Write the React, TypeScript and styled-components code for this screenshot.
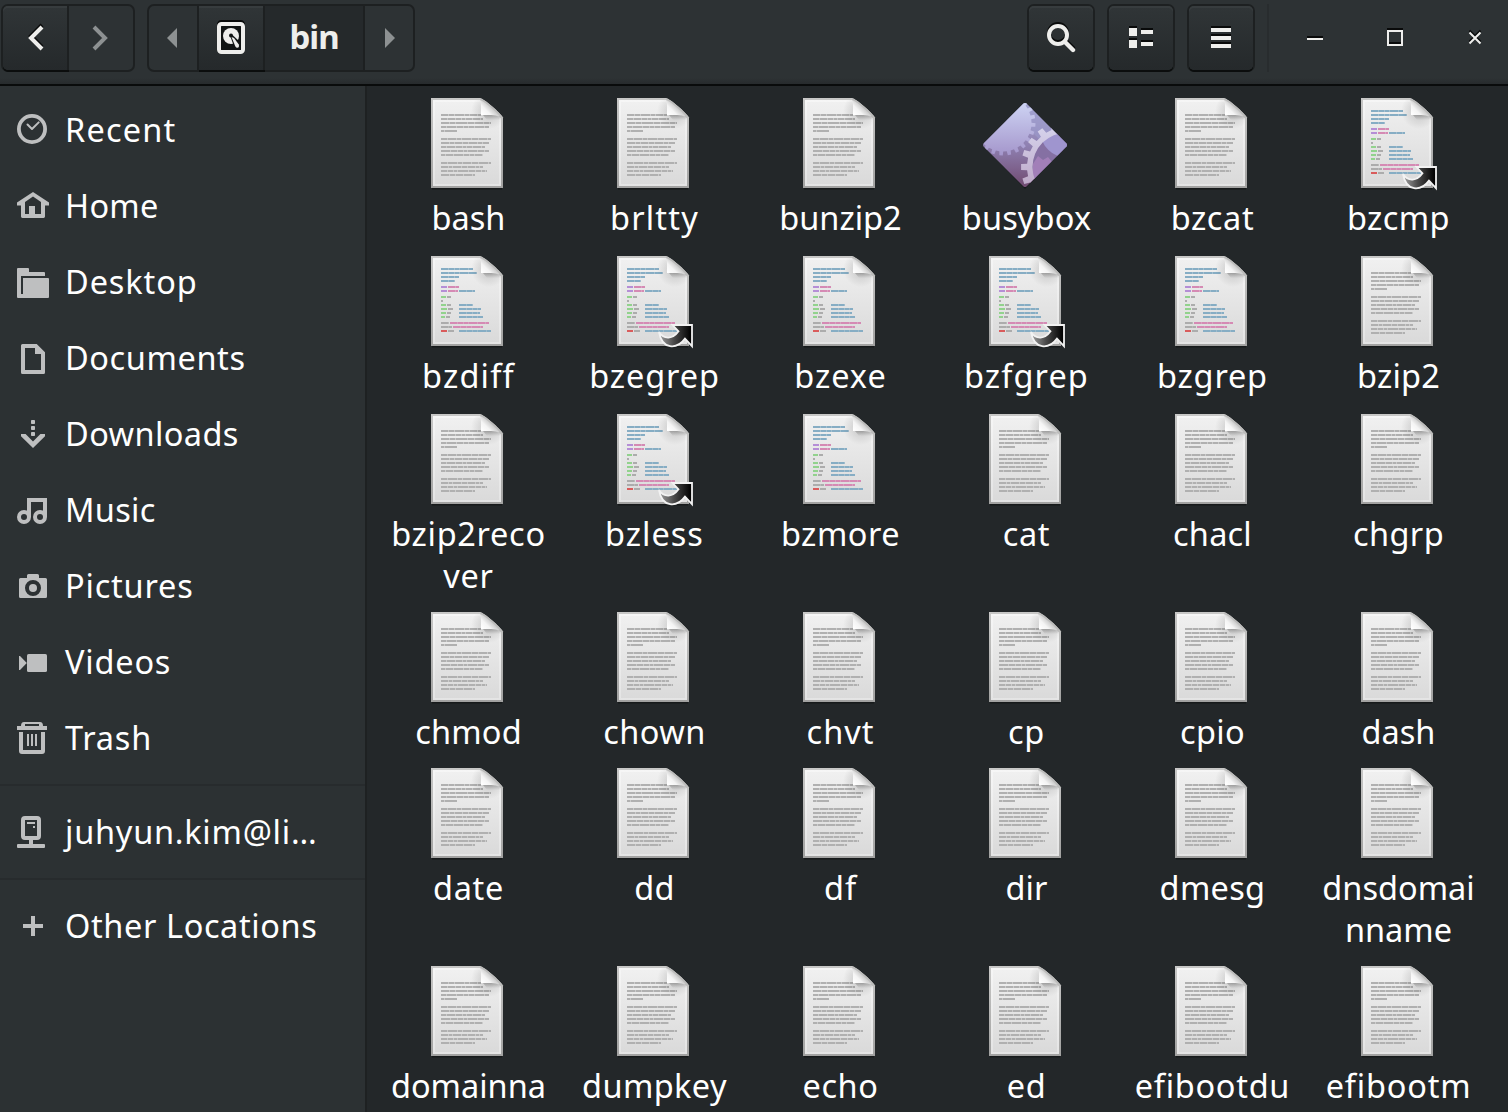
import React from 'react';
import styled, { createGlobalStyle, css } from 'styled-components';

const GlobalStyle = createGlobalStyle`
  * { box-sizing: border-box; }
  html, body { margin: 0; padding: 0; }
  body { background: #232729; overflow: hidden; }
`;

const Window = styled.div`
  width: 1508px;
  height: 1112px;
  display: flex;
  flex-direction: column;
  overflow: hidden;
  background: #232729;
  color: #fff;
  font-family: 'Noto Sans', 'Open Sans', sans-serif;
  font-size: 32.5px;
`;

const HeaderBar = styled.header`
  flex: none;
  height: 86px;
  padding: 4px 0 0 1px;
  display: flex;
  align-items: flex-start;
  background: linear-gradient(#2d3234 0, #2d3234 78px, #272b2d 84px);
  border-bottom: 2px solid #090b0b;
`;

const ButtonGroup = styled.div<{ $gap?: number }>`
  display: flex;
  height: 68px;
  margin-left: ${(p) => p.$gap ?? 0}px;
  border: 2px solid #1d2021;
  border-radius: 7px;
  background: #2d3234;
`;

const raised = css`
  background: linear-gradient(#303537, #25292b);
  box-shadow: inset 0 2px 0 #373c3e, 0 2px 0 #0b0d0d;
`;

const HeaderButton = styled.button<{ $width: number; $look?: 'raised' | 'pressed' }>`
  width: ${(p) => p.$width}px;
  height: 64px;
  padding: 0;
  display: flex;
  align-items: center;
  justify-content: center;
  border: 0;
  border-right: 2px solid #1d2021;
  background: transparent;
  color: #eeeeec;
  font: bold 34px 'Noto Sans', 'Open Sans', sans-serif;
  ${(p) => p.$look === 'raised' && raised}
  ${(p) => p.$look === 'pressed' && css`background: #25292b;`}
  &:first-child { border-radius: 5px 0 0 5px; }
  &:last-child { border-right: 0; }
  &:only-child { border-radius: 5px; }
`;

const CrumbText = styled.span`
  display: block;
  line-height: 46px;
  font-size: 33px;
  letter-spacing: -1px;
  padding-bottom: 2px;
`;

const ActionButtons = styled.div`
  margin-left: auto;
  display: flex;
  gap: 12px;
`;

const HeaderSeparator = styled.div`
  width: 2px;
  height: 68px;
  background: #282c2e;
`;

const WindowControls = styled.div`
  display: flex;
  gap: 56px;
  margin-left: 34px;
  padding: 22px 21px 0 0;
`;

const Glyph = styled.svg<{ $shadow?: boolean }>`
  display: block;
  flex: none;
  overflow: visible;
  ${(p) => p.$shadow && css`filter: drop-shadow(0 -2px 0 #090a0a);`}
`;

const PaintDefs = styled.svg`
  position: absolute;
  width: 0;
  height: 0;
`;

const Body = styled.div`
  flex: 1;
  min-height: 0;
  display: flex;
`;

const Sidebar = styled.nav`
  flex: none;
  width: 367px;
  padding-top: 6px;
  background: #2c3133;
  border-right: 2px solid #1e2122;
`;

const Place = styled.div`
  height: 76px;
  padding: 0 16px;
  display: flex;
  align-items: center;
  gap: 17px;
`;

const PlaceName = styled.span<{ $track?: number }>`
  line-height: 44px;
  white-space: nowrap;
  letter-spacing: ${(p) => p.$track ?? 0}px;
`;

const Divider = styled.hr`
  height: 2px;
  margin: 8px 0;
  border: 0;
  background: #272b2d;
`;

const Files = styled.main`
  flex: 1;
  padding: 12px 0 0 7px;
  display: grid;
  grid-template-columns: repeat(6, 186px);
  grid-template-rows: 158px 158px 198px 156px 198px 158px;
  overflow: hidden;
`;

const File = styled.div`
  display: flex;
  flex-direction: column;
  align-items: center;
`;

const FileIcon = styled.div`
  width: 72px;
  height: 90px;
  margin-bottom: 9px;
  display: flex;
  justify-content: center;
  align-items: flex-end;
`;

const FileName = styled.div<{ $track?: number }>`
  padding-left: 3px;
  line-height: 42px;
  text-align: center;
  white-space: pre;
  letter-spacing: ${(p) => p.$track ?? 0}px;
`;

const gear = (cx: number, cy: number, root: number, tip: number, teeth: number, phase = 0) => {
  const pts: string[] = [];
  const step = (Math.PI * 2) / teeth;
  for (let i = 0; i < teeth; i++) {
    const a = i * step + phase;
    [[-0.26, root], [-0.2, tip], [0.2, tip], [0.26, root]].forEach(([o, r]) => {
      pts.push(`${(cx + r * Math.cos(a + o * step)).toFixed(2)} ${(cy + r * Math.sin(a + o * step)).toFixed(2)}`);
    });
  }
  return `M${pts.join('L')}Z`;
};

const textLines: [number, number, string][] = [
  [16, 50, '7 1 5 1 9 1 4 1'], [20, 52, '6 1 7 1 5 1 3 1'], [24, 60, '8 1 5 1 11 1 6 1'],
  [28, 58, '5 1 9 1 6 1 4 1'], [32, 26, '3 1 12'],
  [40, 60, '6 1 8 1 4 1 9 1'], [44, 58, '8 1 4 1 7 1 5 1'], [48, 54, '5 1 8 1 6 1 3 1'],
  [52, 58, '9 1 6 1 5 1 3 1'], [56, 52, '4 1 7 1 9 1 5 1'],
  [64, 60, '6 1 9 1 4 1 8 1'], [68, 52, '7 1 3 1 8 1 5 1'], [72, 56, '6 1 5 1 3 1 10 1'], [76, 44, '8 1 5 1 7 1'],
];

const BLUE = '#86adc4';
const PINK = '#d58ab4';
const PURPLE = '#b58ed6';
const GREEN = '#92d28d';
const GREY = '#acacac';
const RED = '#d95c5c';

const codeLines: [number, number, number, string][] = [
  [12, 10, 42, BLUE], [16, 10, 46, BLUE], [20, 10, 28, BLUE], [24, 10, 24, BLUE],
  [30, 10, 16, PURPLE], [30, 17, 28, PINK],
  [34, 10, 16, PURPLE], [34, 17, 27, PINK], [34, 28, 44, BLUE],
  [40, 10, 15, GREEN], [40, 16, 20, GREY], [44, 10, 12, GREY],
  [48, 10, 15, GREEN], [48, 16, 20, GREY], [48, 28, 42, BLUE],
  [52, 10, 16, GREEN], [52, 17, 22, GREY], [52, 28, 50, BLUE],
  [56, 10, 15, GREEN], [56, 16, 20, GREY], [56, 28, 49, BLUE],
  [60, 10, 14, GREEN], [60, 15, 19, GREY], [60, 28, 52, BLUE],
  [66, 10, 18, GREY], [66, 19, 58, PINK],
  [70, 10, 21, GREY], [70, 22, 52, PINK],
  [74, 10, 16, RED], [74, 17, 23, GREY], [74, 28, 60, BLUE],
];

const SharedPaint = () => (
  <PaintDefs>
    <defs>
      <linearGradient id="paper" x1="0" y1="0" x2="0" y2="1">
        <stop offset="0" stopColor="#f0f0f0" /><stop offset="1" stopColor="#dadada" />
      </linearGradient>
      <linearGradient id="rim" x1="0" y1="0" x2="0" y2="1">
        <stop offset="0" stopColor="#f6f6f6" /><stop offset="1" stopColor="#e4e4e4" />
      </linearGradient>
      <linearGradient id="edge" x1="0" y1="0" x2="0" y2="1">
        <stop offset="0" stopColor="#c8c8c7" /><stop offset="1" stopColor="#a2a2a1" />
      </linearGradient>
      <linearGradient id="fold" gradientUnits="userSpaceOnUse" x1="51" y1="17" x2="60" y2="8">
        <stop offset="0" stopColor="#ffffff" /><stop offset="0.5" stopColor="#f4f4f4" /><stop offset="1" stopColor="#c4c4c4" />
      </linearGradient>
      <radialGradient id="foldShade" gradientUnits="userSpaceOnUse" cx="58" cy="13" r="18">
        <stop offset="0" stopColor="#000" stopOpacity="0.2" /><stop offset="0.5" stopColor="#000" stopOpacity="0.09" />
        <stop offset="1" stopColor="#000" stopOpacity="0" />
      </radialGradient>
      <linearGradient id="foldLip" gradientUnits="userSpaceOnUse" x1="0" y1="17" x2="0" y2="22">
        <stop offset="0" stopColor="#000" stopOpacity="0.22" /><stop offset="1" stopColor="#000" stopOpacity="0" />
      </linearGradient>
      <linearGradient id="arrow" gradientUnits="userSpaceOnUse" x1="43" y1="0" x2="74" y2="0">
        <stop offset="0" stopColor="#9b9b9b" /><stop offset="0.45" stopColor="#4a4a4a" /><stop offset="1" stopColor="#000" />
      </linearGradient>
      <linearGradient id="gemBack" x1="0" y1="0" x2="0" y2="1">
        <stop offset="0" stopColor="#a9a9d4" /><stop offset="0.5" stopColor="#8f81b2" /><stop offset="1" stopColor="#70496f" />
      </linearGradient>
      <linearGradient id="gemLight" gradientUnits="userSpaceOnUse" x1="0" y1="0" x2="0" y2="55">
        <stop offset="0" stopColor="#ced4f4" /><stop offset="1" stopColor="#a394ca" />
      </linearGradient>
      <linearGradient id="gemRing" gradientUnits="userSpaceOnUse" x1="0" y1="22" x2="0" y2="84">
        <stop offset="0" stopColor="#d7d5ee" /><stop offset="1" stopColor="#bea9c8" />
      </linearGradient>
      <clipPath id="gemClip"><path d="M41.5 1.6Q43 .4 44.5 1.6L84.4 41.5Q85.6 43 84.4 44.5L44.5 84.4Q43 85.6 41.5 84.4L1.6 44.5Q.4 43 1.6 41.5Z" /></clipPath>
      <clipPath id="ringHole"><circle cx="85" cy="65" r="35" /></clipPath>
      <clipPath id="sheetClip"><path d="M2 2H49L70 19.5V88H2Z" /></clipPath>
    </defs>
  </PaintDefs>
);

type Kind = 'text' | 'code' | 'link' | 'app';

const Sheet = ({ kind }: { kind: Kind }) => (
  <Glyph width="72" height="90" viewBox="0 0 72 90">
    <path d="M1 90.6H71" stroke="#171a1b" strokeWidth="2" />
    <path d="M0 0H49C53 .8 69 14.5 72 19.5V90H0Z" fill="url(#edge)" />
    <path d="M2 2H49L70 20V88H2Z" fill="url(#rim)" />
    <path d="M4 4H49L68 20V86H4Z" fill="url(#paper)" />
    {kind === 'text'
      ? textLines.map(([y, end, dash]) => (
          <g key={y} strokeWidth="2">
            <path d={`M10 ${y + 1}H${end}`} stroke="#cbcbcb" />
            <path d={`M10 ${y + 1}H${end}`} stroke="#b0b0b0" strokeDasharray={dash} />
          </g>
        ))
      : codeLines.map(([y, start, end, color]) => (
          <g key={`${y}-${start}`} stroke={color} strokeWidth="2">
            <path d={`M${start} ${y + 1}H${end}`} opacity="0.7" />
            <path d={`M${start} ${y + 1}H${end}`} strokeDasharray="7 1 5 1 4 1 8 1" />
          </g>
        ))}
    <circle cx="58" cy="13" r="18" fill="url(#foldShade)" clipPath="url(#sheetClip)" />
    <path d="M52 17H69L70 22H56Z" fill="url(#foldLip)" />
    <path d="M49 1C50.4 4 50 11 50 17C57 17 67 16.4 71.5 20C68 14 55 2.5 49 1Z" fill="url(#fold)" />
    <path d="M49 1C54 2.6 67 14 71.3 20" fill="none" stroke="#bcbcbb" strokeWidth="1.8" />
    {kind === 'link' && (
      <path
        d="M55.5 69H75V90.2L68 82.6C60 93.5 45 94 42 76C47 84 56 83 61.5 75.3Z"
        fill="url(#arrow)" stroke="#f2f2f2" strokeWidth="1.8"
      />
    )}
  </Glyph>
);

const AppGem = () => (
  <Glyph width="86" height="86" viewBox="0 0 86 86">
    <path d="M3 45L43 85.5L83 45L43 87Z" fill="#15181a" />
    <g clipPath="url(#gemClip)">
      <rect width="86" height="86" fill="url(#gemBack)" />
      <path d="M43 0L86 43L60 40L50 30Z" fill="#9c9dcd" opacity=".55" />
      <path d={gear(21, 21, 28.5, 32.5, 24, 0.06)} fill="url(#gemLight)" />
      <circle cx="85" cy="65" r="35" fill="#8570a3" />
      <g clipPath="url(#ringHole)">
        <circle cx="86" cy="28" r="28" fill="#9f95cf" />
        <path d="M51 62L56 54L61 58L66 55L70 60L62 72L51 84Z" fill="#a27fb8" />
      </g>
      <path
        d={`${gear(85, 65, 40, 46, 20)}M119.5 65A34.5 34.5 0 1 0 50.5 65A34.5 34.5 0 1 0 119.5 65Z`}
        fillRule="evenodd" fill="url(#gemRing)"
      />
    </g>
  </Glyph>
);

const placeArt: Record<string, React.ReactNode> = {
  Recent: (
    <g fill="none" stroke="#bebfc0">
      <circle cx="16" cy="15" r="13.1" strokeWidth="3.8" />
      <path d="M11.5 10.5L16 15L22.7 8.4" strokeWidth="2" strokeLinecap="round" strokeLinejoin="round" />
    </g>
  ),
  Home: (
    <path d="M17 2L33 12.6V15.4H29V26.6Q29 28 27.6 28H6.4Q5 28 5 26.6V15.4H1V12.6ZM9 12V24H13V16H19V24H25V12L17 6.6Z" fillRule="evenodd" />
  ),
  Desktop: <path d="M2 2H12Q13 2 13 3V6H28Q29 6 29 7V10H5V28H7V12H32Q33 12 33 13V31Q33 32 32 32H2Q1 32 1 31V3Q1 2 2 2Z" />,
  Documents: <path d="M6.5 2H20.7L29 10.2V30.5Q29 32 27.5 32H6.5Q5 32 5 30.5V3.5Q5 2 6.5 2ZM9 6V28H25V12H19V6Z" fillRule="evenodd" />,
  Downloads: (
    <>
      <rect x="15" y="2" width="4" height="4" rx=".8" /><rect x="15" y="8" width="4" height="4" rx=".8" /><rect x="15" y="14" width="4" height="4" rx=".8" />
      <path d="M5 16H9.6L17 23.5L24.4 16H29V18.2L17 30L5 18.2Z" />
    </>
  ),
  Music: (
    <>
      <path d="M11 4H31V23H27V8H15V23H11Z" />
      <g fill="none" stroke="#bebfc0" strokeWidth="4"><circle cx="8" cy="23" r="5" /><circle cx="24" cy="23" r="5" /></g>
    </>
  ),
  Pictures: (
    <>
      <path d="M4.5 8H11V5.5Q11 4 12.5 4H21.5Q23 4 23 5.5V8H29.5Q31 8 31 9.5V26.5Q31 28 29.5 28H4.5Q3 28 3 26.5V9.5Q3 8 4.5 8ZM17 10A8 8 0 1 0 17 26A8 8 0 1 0 17 10Z" fillRule="evenodd" />
      <circle cx="17" cy="18" r="4" />
    </>
  ),
  Videos: <><rect x="11" y="8" width="20" height="18" rx="1.6" /><path d="M3 10L4 10L10.8 17L4 24H3Z" /></>,
  Trash: (
    <>
      <path d="M1 4H5Q5 0 8 0H24Q27 0 27 4H31V8H1ZM9 2V4H23V2Z" fillRule="evenodd" />
      <path d="M3 10H7V28H25V10H29V29Q29 32 26 32H6Q3 32 3 29Z" />
      <path d="M11 12H13V24H11ZM15 12H17V24H15ZM19 12H21V24H19Z" />
    </>
  ),
  Server: (
    <>
      <rect x="7" y="2" width="16" height="20" rx="2" fill="none" stroke="#bebfc0" strokeWidth="4" />
      <path d="M11 6H19V8H11ZM17 10H19V12H17ZM13 23H17V28H28.2Q29 28 29 29V31Q29 32 28 32H2Q1 32 1 31V29Q1 28 2 28H13Z" />
    </>
  ),
  Plus: <path d="M15 6H19V14H27V18H19V26H15V18H7V14H15Z" />,
};

const PlaceRow = ({ art, name, track }: { art: string; name: string; track?: number }) => (
  <Place>
    <Glyph width="32" height="32" viewBox="0 0 32 32" fill="#bebfc0">{placeArt[art]}</Glyph>
    <PlaceName $track={track}>{name}</PlaceName>
  </Place>
);

const places: [string, number][] = [
  ['Recent', 1.2], ['Home', 0.3], ['Desktop', 0.9], ['Documents', 0.6], ['Downloads', 0.4], ['Music', 0.3],
  ['Pictures', 0.8], ['Videos', 0.8], ['Trash', 0.8],
];

const files: [string, Kind, number?][] = [
  ['bash', 'text'], ['brltty', 'text', 1.2], ['bunzip2', 'text'], ['busybox', 'app', 0.15], ['bzcat', 'text', 0.6], ['bzcmp', 'link', 0.4],
  ['bzdiff', 'code', 1.2], ['bzegrep', 'link', 0.9], ['bzexe', 'code', 1], ['bzfgrep', 'link', 1.1], ['bzgrep', 'code', 0.8], ['bzip2', 'text', 0.2],
  ['bzip2reco\nver', 'text', 0.7], ['bzless', 'link', 1], ['bzmore', 'code', 0.5], ['cat', 'text', 0.6], ['chacl', 'text', 0.2], ['chgrp', 'text', 0.4],
  ['chmod', 'text', 0.2], ['chown', 'text', 0.4], ['chvt', 'text', 1], ['cp', 'text', 0.8], ['cpio', 'text', 0.3], ['dash', 'text'],
  ['date', 'text', 0.7], ['dd', 'text', 0.3], ['df', 'text', 1], ['dir', 'text'], ['dmesg', 'text', 0.3], ['dnsdomai\nnname', 'text'],
  ['domainna', 'text'], ['dumpkey', 'text', 0.4], ['echo', 'text', 0.6], ['ed', 'text', 0.6], ['efibootdu', 'text', 0.7], ['efibootm', 'text', 0.8],
];

export default function App() {
  return (
    <Window>
      <GlobalStyle />
      <SharedPaint />
      <HeaderBar>
        <ButtonGroup>
          <HeaderButton $width={66} $look="raised" aria-label="Back">
            <Glyph $shadow width="16" height="26" viewBox="0 0 16 26" fill="none" stroke="#eeeeec" strokeWidth="4">
              <path d="M15 2L4 13L15 24" />
            </Glyph>
          </HeaderButton>
          <HeaderButton $width={64} aria-label="Forward">
            <Glyph width="16" height="26" viewBox="0 0 16 26" fill="none" stroke="#8d9192" strokeWidth="4">
              <path d="M1 2L12 13L1 24" />
            </Glyph>
          </HeaderButton>
        </ButtonGroup>
        <ButtonGroup $gap={12}>
          <HeaderButton $width={50} aria-label="Earlier folders">
            <Glyph width="12" height="20" viewBox="0 0 12 20" fill="#8d9192"><path d="M10 0V20L0 10Z" /></Glyph>
          </HeaderButton>
          <HeaderButton $width={66} $look="raised" aria-label="Disk">
            <Glyph $shadow width="28" height="32" viewBox="0 0 28 32">
              <rect x="2" y="2" width="24" height="28" rx="2.5" fill="#111414" stroke="#eeeeec" strokeWidth="4" />
              <circle cx="14" cy="14" r="8" fill="#eeeeec" />
              <path d="M13 13.5L15.5 13L23.6 20.5V26H17.6Z" fill="#111414" />
              <circle cx="14" cy="13.6" r="2" fill="#111414" />
              <path d="M14.5 15L17 16L21.8 22.6Q22.6 25.6 20.4 25.8Q19 25.8 18.4 24.4Z" fill="#eeeeec" />
            </Glyph>
          </HeaderButton>
          <HeaderButton $width={100} $look="pressed"><CrumbText>bin</CrumbText></HeaderButton>
          <HeaderButton $width={48} aria-label="Later folders">
            <Glyph width="12" height="20" viewBox="0 0 12 20" fill="#8d9192"><path d="M2 0V20L12 10Z" /></Glyph>
          </HeaderButton>
        </ButtonGroup>
        <ActionButtons>
          <ButtonGroup>
            <HeaderButton $width={64} $look="raised" aria-label="Search">
              <Glyph $shadow width="28" height="28" viewBox="0 0 28 28" fill="none" stroke="#eeeeec">
                <circle cx="11" cy="11" r="9" strokeWidth="4" />
                <path d="M18 18L26 26" strokeWidth="4.4" strokeLinecap="round" />
              </Glyph>
            </HeaderButton>
          </ButtonGroup>
          <ButtonGroup>
            <HeaderButton $width={64} $look="raised" aria-label="View">
              <Glyph $shadow width="24" height="20" viewBox="0 0 24 20" fill="#eeeeec">
                <path d="M0 0H8V8H0ZM0 12H8V20H0ZM12 2H24V6H12ZM12 14H24V18H12Z" />
              </Glyph>
            </HeaderButton>
          </ButtonGroup>
          <ButtonGroup>
            <HeaderButton $width={64} $look="raised" aria-label="Menu">
              <Glyph $shadow width="20" height="20" viewBox="0 0 20 20" fill="#eeeeec">
                <path d="M0 0H20V4H0ZM0 8H20V12H0ZM0 16H20V20H0Z" />
              </Glyph>
            </HeaderButton>
          </ButtonGroup>
          <HeaderSeparator />
        </ActionButtons>
        <WindowControls>
          <Glyph $shadow width="24" height="24" viewBox="0 0 24 24" fill="#eeeeec"><path d="M4 12H20V14H4Z" /></Glyph>
          <Glyph $shadow width="24" height="24" viewBox="0 0 24 24" fill="none" stroke="#eeeeec" strokeWidth="2"><path d="M5 5H19V19H5Z" /></Glyph>
          <Glyph $shadow width="24" height="24" viewBox="0 0 24 24" fill="none" stroke="#eeeeec" strokeWidth="2"><path d="M6.5 6.5L17.5 17.5M17.5 6.5L6.5 17.5" /></Glyph>
        </WindowControls>
      </HeaderBar>
      <Body>
        <Sidebar>
          {places.map(([name, track]) => <PlaceRow key={name} art={name} name={name} track={track} />)}
          <Divider />
          <PlaceRow art="Server" name="juhyun.kim@li…" track={0.75} />
          <Divider />
          <PlaceRow art="Plus" name="Other Locations" track={0.6} />
        </Sidebar>
        <Files>
          {files.map(([name, kind, track]) => (
            <File key={name}>
              <FileIcon>{kind === 'app' ? <AppGem /> : <Sheet kind={kind} />}</FileIcon>
              <FileName $track={track}>{name}</FileName>
            </File>
          ))}
        </Files>
      </Body>
    </Window>
  );
}
